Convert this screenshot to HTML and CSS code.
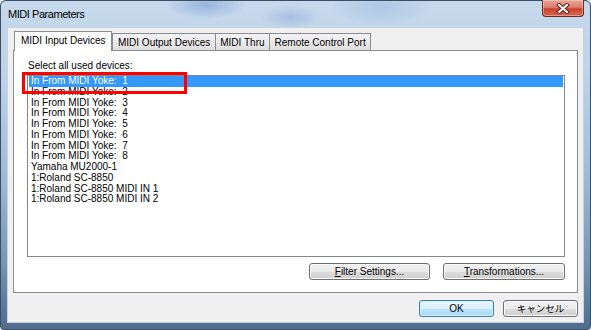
FILE: index.html
```html
<!DOCTYPE html>
<html lang="en">
<head>
  <meta charset="UTF-8" />
  <title>MIDI Parameters</title>
  <link rel="stylesheet" href="styles.css">
</head>
<body>

<div class="window">
  <div class="titlebar">
    <span class="title">MIDI Parameters</span>
    <div class="close-btn">
      <svg width="14" height="11" viewBox="0 0 14 11">
        <path d="M3 2 L11 9 M11 2 L3 9" stroke="#5a2218" stroke-width="4" stroke-linecap="square" fill="none"/>
        <path d="M3 2 L11 9 M11 2 L3 9" stroke="#ffffff" stroke-width="2" stroke-linecap="square" fill="none"/>
      </svg>
    </div>
  </div>

  <div class="client">
    <div class="tabs">
      <div class="tab active">MIDI Input Devices</div>
      <div class="tab">MIDI Output Devices</div>
      <div class="tab">MIDI Thru</div>
      <div class="tab">Remote Control Port</div>
    </div>

    <div class="panel">
      <div class="label">Select all used devices:</div>
      <div class="listbox">
        <div class="item selected">In From MIDI Yoke:  1</div>
        <div class="item">In From MIDI Yoke:  2</div>
        <div class="item">In From MIDI Yoke:  3</div>
        <div class="item">In From MIDI Yoke:  4</div>
        <div class="item">In From MIDI Yoke:  5</div>
        <div class="item">In From MIDI Yoke:  6</div>
        <div class="item">In From MIDI Yoke:  7</div>
        <div class="item">In From MIDI Yoke:  8</div>
        <div class="item">Yamaha MU2000-1</div>
        <div class="item">1:Roland SC-8850</div>
        <div class="item">1:Roland SC-8850 MIDI IN 1</div>
        <div class="item">1:Roland SC-8850 MIDI IN 2</div>
        <div class="mark"></div>
      </div>
      <div class="panel-buttons">
        <button class="btn btn-wide"><u>F</u>ilter Settings...</button>
        <button class="btn btn-wide btn-trans"><u>T</u>ransformations...</button>
      </div>
    </div>

    <div class="dialog-buttons">
      <button class="btn btn-default">OK</button>
      <button class="btn btn-cancel">キャンセル</button>
    </div>
  </div>
</div>

</body>
</html>
```

FILE: styles.css
```css
:root {
  --border: #898c95;
  --face: #f0f0f0;
  --select: #3399ff;
}

body {
  margin: 0;
  font-family: 'Liberation Sans', 'Noto Sans CJK JP', sans-serif;
  font-size: 10px;
  color: #000;
  background: #dfe6ee;
}

.window {
  width: 591px;
  height: 330px;
  box-sizing: border-box;
  border: 1px solid #3b4f66;
  border-radius: 6px 6px 4px 4px;
  padding: 0 6px 6px;
  display: flex;
  flex-direction: column;
  background:
    radial-gradient(ellipse 40px 14px at 205px 4px, rgba(70, 110, 190, 0.35), transparent),
    radial-gradient(ellipse 30px 12px at 290px 16px, rgba(80, 120, 190, 0.25), transparent),
    radial-gradient(ellipse 50px 18px at 380px 6px, rgba(120, 160, 210, 0.3), transparent),
    linear-gradient(to bottom, #c6d9ed 0%, #bcd1e7 25%, #9fb8d2 55%, #7693b2 80%, #4f6c8c 100%);
}

/* title bar */
.titlebar {
  height: 26px;
  display: flex;
  justify-content: space-between;
  align-items: flex-start;
}

.title {
  padding: 6px 0 0 1px;
  font-size: 11px;
  letter-spacing: -0.45px;
  line-height: 14px;
  color: #000;
}

.close-btn {
  width: 42px;
  height: 17px;
  margin-top: -1px;
  box-sizing: border-box;
  border: 1px solid #6b2a22;
  border-top: none;
  border-radius: 0 0 4px 4px;
  background: linear-gradient(to bottom, #e7a597 0%, #dc8070 45%, #c9452f 55%, #d5654b 100%);
  box-shadow: inset 0 0 0 1px rgba(255, 220, 210, 0.45);
  display: flex;
  justify-content: center;
  align-items: center;
}

/* client area */
.client {
  flex: 1;
  display: flex;
  flex-direction: column;
  background: var(--face);
  border: 1px solid #c5d2df;
  padding: 3px 5px 5px;
}

.tabs {
  display: flex;
  align-items: flex-end;
  padding-left: 1px;
}

.tab {
  height: 17px;
  line-height: 17px;
  padding: 0 4.5px;
  border: 1px solid var(--border);
  border-bottom: none;
  box-sizing: border-box;
  background: linear-gradient(to bottom, #f4f4f4 0%, #ebebeb 50%, #dedede 100%);
  white-space: nowrap;
  margin-left: -1px;
}

.tab.active {
  height: 20px;
  line-height: 18px;
  padding: 0 6px;
  margin-left: 0;
  margin-bottom: -1px;
  background: #fff;
  position: relative;
  z-index: 1;
}

.tab.active + .tab {
  margin-left: 0;
}

/* tab page */
.panel {
  flex: 1;
  display: flex;
  flex-direction: column;
  background: #fff;
  border: 1px solid var(--border);
  padding: 9px 12px 12px 13px;
}

.label {
  line-height: 12px;
  padding-left: 1px;
}

.listbox {
  flex: 1;
  margin-top: 3px;
  border: 1px solid #828790;
  padding: 0 1px;
  position: relative;
}

.item {
  white-space: pre;
  line-height: 10.75px;
  height: 10.75px;
  padding-left: 2px;
}

.item.selected {
  background: var(--select);
  color: #fff;
}

/* red annotation box */
.mark {
  position: absolute;
  left: -6px;
  top: -4px;
  width: 159px;
  height: 16px;
  border: 3px solid #f00;
}

.panel-buttons,
.dialog-buttons {
  display: flex;
  justify-content: flex-end;
}

.panel-buttons {
  margin-top: 6px;
  gap: 13px;
}

.dialog-buttons {
  margin-top: 7px;
  gap: 9px;
}

.btn {
  height: 17px;
  width: 75px;
  padding: 0;
  font-family: inherit;
  font-size: 10px;
  line-height: 15px;
  color: #000;
  border: 1px solid #707070;
  border-radius: 3px;
  background: linear-gradient(to bottom, #f2f2f2 0%, #ebebeb 50%, #dddddd 51%, #cfcfcf 100%);
  box-shadow: inset 0 0 0 1px #fbfbfb;
}

.btn-wide {
  width: 121px;
}

.btn-trans {
  width: 122px;
}

.btn-default {
  border-color: #3c7fb1;
  background: linear-gradient(to bottom, #eaf6fd 0%, #d9f0fc 50%, #bee6fd 51%, #a7d9f5 100%);
  box-shadow: inset 0 0 0 1px #d4eefc;
}

.btn-cancel {
  font-size: 9.5px;
}
```
